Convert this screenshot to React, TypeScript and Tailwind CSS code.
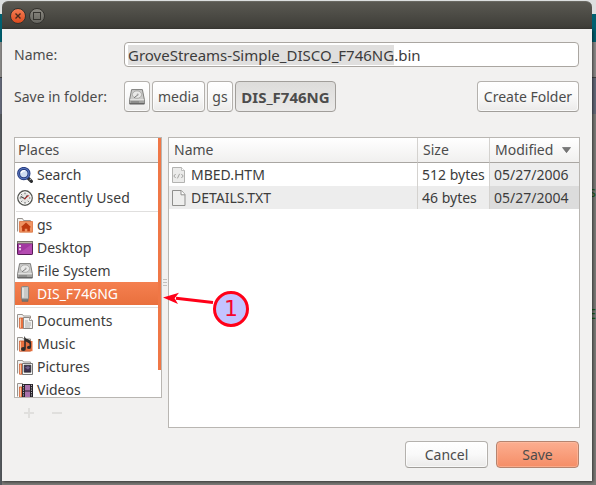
import { useEffect, useRef, useState } from "react";
import type { ReactNode } from "react";
import { clsx } from "clsx";

const FILE_STEM = "GroveStreams-Simple_DISCO_F746NG";

const BUTTON =
  "h-full rounded border border-[#b4b1ad] border-b-[#a19e9a] bg-linear-to-b from-white via-[#f9f9f9] to-[#ebeae9] text-center shadow-[inset_0_0_0_1px_#ffffffb0]";

function Icon({ children }: { children: ReactNode }) {
  return (
    <svg viewBox="0 0 16 16" className="size-4 shrink-0" aria-hidden="true">
      {children}
    </svg>
  );
}

function SearchIcon() {
  return (
    <Icon>
      <path d="M11 11l3.4 3.4" stroke="#2b2d30" strokeWidth="3.2" strokeLinecap="round" />
      <path d="M12.5 13l1.6-1" stroke="#b9bcc0" strokeWidth="1" />
      <circle cx="6.8" cy="6.6" r="5.2" fill="#cfdcf0" stroke="#23387c" strokeWidth="3" />
      <circle cx="6.8" cy="6.6" r="5.2" fill="none" stroke="#5876bd" strokeWidth="1.1" />
      <path d="M4.2 6.2a3 3 0 0 1 4-2.4" fill="none" stroke="#fff" strokeWidth="1.4" />
    </Icon>
  );
}

function ClockIcon() {
  return (
    <Icon>
      <circle cx="8" cy="8" r="7.2" fill="#e6e6e4" stroke="#555753" strokeWidth="1.4" />
      <circle cx="8" cy="8" r="6" fill="none" stroke="#fff" strokeWidth="0.9" />
      <path d="M8 2.6v1.6M8 12v1.6M2.6 8h1.6M12 8h1.4M4.2 4.2l1 1M11.8 11.8l-1-1M4.2 11.8l1-1" stroke="#666" strokeWidth="1" />
      <path d="M3.7 6.4L8 8.7l2.5-3.6" fill="none" stroke="#454545" strokeWidth="1.1" />
      <path d="M7 9.2l5.2-3.9" stroke="#d22" strokeWidth="0.9" />
    </Icon>
  );
}

// grey tab folder with the orange sheet, shared by the media folders
function FolderBase({ children }: { children: ReactNode }) {
  return (
    <Icon>
      <path d="M.5 14.5V1.5h5l1 1.5h7v3" fill="#f2f2f1" stroke="#99948f" />
      <path d="M2.5 15.2V5h11v10.2z" fill="#e8713f" stroke="#c65427" strokeWidth="0.8" />
      <path d="M3.4 5.5v9.2" stroke="#f8c5a0" strokeWidth="1.2" />
      {children}
    </Icon>
  );
}

function HomeIcon() {
  return (
    <Icon>
      <path d="M.5 14.5v-13h5l1 2h7v2" fill="#f2f2f1" stroke="#99948f" />
      <path d="M2.5 4.5h13v10.7h-13z" fill="#f09463" stroke="#d9713e" strokeWidth="0.8" />
      <path d="M9 5.6l5.2 4.7h-1.3v4h-2.6v-2.6H7.8v2.6H5.1v-4H3.8z" fill="#bd3a0f" />
    </Icon>
  );
}

function DesktopIcon() {
  return (
    <Icon>
      <rect x=".5" y="1.5" width="15" height="13" rx=".6" fill="#a23aa0" stroke="#571c56" />
      <path d="M1.2 14L15 4v10z" fill="#c25abf" opacity=".55" />
      <path d="M0 1h16v2.6H0z" fill="#77766b" />
      <path d="M1 2h14v.8H1z" fill="#c9c8b7" />
      <path d="M2 5h2v2H2zM2 8.2h2v2H2z" fill="#ead3e9" />
    </Icon>
  );
}

function DriveIcon() {
  return (
    <Icon>
      <path d="M2.6.6h10.8l2 10.2v4H.6v-4z" fill="#cbcbca" stroke="#7e7e7c" />
      <ellipse cx="8" cy="5.6" rx="4.6" ry="3.7" fill="#e9e9e8" stroke="#a2a2a0" strokeWidth=".8" />
      <path d="M5 8.8l4-3" stroke="#777" strokeWidth="1" />
      <circle cx="8.7" cy="5.5" r="1" fill="#aaa" />
      <path d="M1 11h14v3.6H1z" fill="#a3a3a1" />
      <path d="M1 10.9h14" stroke="#f7f7f7" strokeWidth=".8" />
      <path d="M3 12v2M5 12v2M7 12v2M9 12v2" stroke="#6c6c6c" strokeWidth=".8" />
      <path d="M.6 14.8h14.8" stroke="#4f4f4f" />
    </Icon>
  );
}

function UsbIcon() {
  return (
    <Icon>
      <path d="M5 12h6v3.4H5z" fill="#777775" stroke="#686865" strokeWidth=".6" />
      <rect x="4.4" y=".6" width="7.2" height="12.4" rx="1" fill="#c8c9c7" stroke="#848482" />
      <path d="M6 2v9.6" stroke="#ebebea" strokeWidth="1.4" />
    </Icon>
  );
}

function DocumentsIcon() {
  return (
    <FolderBase>
      <path d="M6.5 4.5h6l3 3v8h-9z" fill="#f2f2f1" stroke="#8b8985" />
      <path d="M12.5 4.5v3h3" fill="#fff" stroke="#8b8985" strokeWidth=".8" />
      <path d="M8 8h3M8 10h6M8 12h6M8 14h5" stroke="#a6a6a4" strokeWidth=".9" />
    </FolderBase>
  );
}

function MusicIcon() {
  return (
    <FolderBase>
      <path d="M13.5 5h2v10.2h-2z" fill="#e8713f" />
      <path d="M8 12.4V2.6c1 1.5 5.3 1.3 5.3 4.4v4" fill="none" stroke="#2c2c2c" strokeWidth="1.6" />
      <path d="M8.2 4l5 3" stroke="#2c2c2c" strokeWidth="1.8" />
      <ellipse cx="6.4" cy="13" rx="2.4" ry="1.9" fill="#2c2c2c" />
      <ellipse cx="12" cy="11.4" rx="2" ry="1.7" fill="#2c2c2c" />
    </FolderBase>
  );
}

function PicturesIcon() {
  return (
    <FolderBase>
      <path d="M5.5 4.5h10v11h-10z" fill="#f7f7f7" stroke="#777" />
      <path d="M7.2 6.2h6.6v7H7.2z" fill="#3d3150" stroke="#222" strokeWidth=".7" />
      <path d="M8 8.4l3-1.4 2 1.6-2 2z" fill="#74658d" />
    </FolderBase>
  );
}

function VideosIcon() {
  return (
    <FolderBase>
      <path d="M5 2h11v13.8H5z" fill="#272329" />
      <path d="M8 3h5v5.4H8zM8 9.4h5v5.6H8z" fill="#a971ab" />
      <path d="M6.5 2.8v12.6M14.5 2.8v12.6" stroke="#b9b4bb" strokeWidth="1" strokeDasharray="1.2 1.2" />
    </FolderBase>
  );
}

function HtmlFileIcon() {
  return (
    <Icon>
      <path d="M1.5.5h9l3 3v12h-12z" fill="#ebebea" stroke="#b3b3b1" />
      <path d="M10.5.5v3h3" fill="#fff" stroke="#b3b3b1" strokeWidth=".8" />
      <path d="M4.6 7L2.8 9l1.8 2M10.4 7l1.8 2-1.8 2M8.6 6.8l-2.2 4.6" fill="none" stroke="#989896" strokeWidth=".9" />
    </Icon>
  );
}

function TextFileIcon() {
  return (
    <Icon>
      <path d="M1.5.5h8.8l3.7 4v11H1.5z" fill="#eeeeed" stroke="#8f8f8d" />
      <path d="M10 .8v4h4" fill="#fff" stroke="#8f8f8d" />
    </Icon>
  );
}

const placeGroups = [
  [
    { name: "Search", icon: <SearchIcon /> },
    { name: "Recently Used", icon: <ClockIcon /> },
  ],
  [
    { name: "gs", icon: <HomeIcon /> },
    { name: "Desktop", icon: <DesktopIcon /> },
    { name: "File System", icon: <DriveIcon /> },
    { name: "DIS_F746NG", icon: <UsbIcon /> },
  ],
  [
    { name: "Documents", icon: <DocumentsIcon /> },
    { name: "Music", icon: <MusicIcon /> },
    { name: "Pictures", icon: <PicturesIcon /> },
    { name: "Videos", icon: <VideosIcon /> },
  ],
];

const files = [
  { name: "MBED.HTM", size: "512 bytes", modified: "05/27/2006", icon: <HtmlFileIcon /> },
  { name: "DETAILS.TXT", size: "46 bytes", modified: "05/27/2004", icon: <TextFileIcon /> },
];

function Backdrop() {
  return (
    <div
      aria-hidden="true"
      className="absolute inset-0 -z-10 flex flex-col overflow-hidden bg-[#7c7b78] text-right text-sm leading-4 text-[#1d5c1b]"
    >
      <div className="h-3.5 bg-[#dcdfdf]" />
      <div className="h-7 bg-[#006070]" />
      <div className="h-9 border-b border-[#444] bg-[#8b8a88]" />
      <div className="h-9 bg-[#656a7a]" />
      <div className="flex-1 border-l-2 border-[#565b5f]">
        <div className="pt-[70px]">s</div>
        <div className="pt-[106px]">E</div>
      </div>
    </div>
  );
}

function TitleBar() {
  return (
    <header className="flex h-7 shrink-0 items-center gap-[3px] rounded-t-md border-t border-[#6a6962] bg-linear-to-b from-[#5a5952] to-[#3d3c37] px-2">
      <button
        aria-label="Close"
        className="flex size-4 items-center justify-center rounded-full border border-[#33322e] bg-linear-to-b from-[#f57c52] to-[#dd4a1c]"
      >
        <svg viewBox="0 0 8 8" className="size-2">
          <path d="M1.5 1.5l5 5M6.5 1.5l-5 5" stroke="#4a2a1c" strokeWidth="1.4" />
        </svg>
      </button>
      <button
        aria-label="Maximize"
        className="flex size-4 items-center justify-center rounded-full border border-[#33322e] bg-linear-to-b from-[#8b8982] to-[#66655f]"
      >
        <span className="size-2 border border-[#34332f]" />
      </button>
    </header>
  );
}

function PlacesPane() {
  const [selected, setSelected] = useState("DIS_F746NG");
  return (
    <div className="flex min-h-0 w-[148px] shrink-0 flex-col">
      <div className="flex min-h-0 flex-1 overflow-hidden border border-[#b9b6b2] bg-white">
        <div className="min-w-0 flex-1">
          <h2 className="h-[25px] border-b border-[#a9a6a2] bg-linear-to-b from-white to-[#f0efee] pl-[3px] leading-6">
            Places
          </h2>
          {placeGroups.map((group, i) => (
            <div key={i}>
              {i > 0 && <hr className="mt-0.5 mb-px ml-px border-[#e0dfde]" />}
              <ul>
                {group.map((place) => (
                  <li key={place.name}>
                    <button
                      onClick={() => setSelected(place.name)}
                      className={clsx(
                        "flex h-[23px] w-full items-center gap-1 pl-0.5 text-left whitespace-nowrap",
                        place.name === selected
                          ? "bg-linear-to-b from-[#f58050] to-[#e9703d] text-white"
                          : "text-[#3c3c3c]"
                      )}
                    >
                      {place.icon}
                      {place.name}
                    </button>
                  </li>
                ))}
              </ul>
            </div>
          ))}
        </div>
        <div className="h-[232px] w-[3px] bg-[#f07746]" />
      </div>
      <div className="flex h-[30px] shrink-0 items-center gap-4 pl-[9px] text-[#e0dfdd]">
        <button disabled aria-label="Add bookmark" className="p-px">
          <svg viewBox="0 0 10 10" className="size-2.5">
            <path d="M0 5h10M5 0v10" stroke="currentColor" strokeWidth="2" />
          </svg>
        </button>
        <button disabled aria-label="Remove bookmark" className="p-px">
          <svg viewBox="0 0 10 10" className="size-2.5">
            <path d="M0 5h10" stroke="currentColor" strokeWidth="2" />
          </svg>
        </button>
      </div>
    </div>
  );
}

function Splitter() {
  return (
    <div className="relative flex w-1.5 shrink-0 flex-col items-center justify-center gap-0.5">
      <span className="h-px w-1 bg-[#c2c0bd]" />
      <span className="h-px w-1 bg-[#c2c0bd]" />
      <span className="h-px w-1 bg-[#c2c0bd]" />
      {/* step marker pointing at the selected drive */}
      <svg viewBox="0 0 88 38" className="absolute top-[153px] left-0 z-10 h-[38px] w-[88px]">
        <path d="M14 8.2L51 12.4" stroke="#ff0018" strokeWidth="3" />
        <path d="M1 7.5L17 2.8L12.6 8.2L16 14z" fill="#ff0018" />
        <circle cx="69" cy="19" r="16.5" fill="#c3c3ff" stroke="#ff0018" strokeWidth="3" />
        <text x="69" y="26" textAnchor="middle" fontSize="22" fill="#f5052d" fontFamily="DejaVu Sans, sans-serif">
          1
        </text>
      </svg>
    </div>
  );
}

function FileTable() {
  return (
    <div className="min-w-0 flex-1 overflow-hidden border border-[#b9b6b2] bg-white">
      <table className="w-full table-fixed border-separate border-spacing-0 text-left whitespace-nowrap">
        <colgroup>
          <col />
          <col className="w-[72px]" />
          <col className="w-[90px]" />
        </colgroup>
        <thead>
          <tr className="h-[25px] bg-linear-to-b from-white to-[#f0efee]">
            <th className="border-b border-[#a9a6a2] p-0 pl-[5px] font-normal">Name</th>
            <th className="border-b border-l border-b-[#a9a6a2] border-l-[#d4d2cf] p-0 pl-[5px] font-normal">Size</th>
            <th className="border-b border-l border-b-[#a9a6a2] border-l-[#d4d2cf] p-0 pl-[5px] font-normal">
              <div className="flex items-center justify-between pr-2">
                Modified
                <svg viewBox="0 0 9 6" className="h-1.5 w-[9px]">
                  <path d="M.5.5h8L4.5 5.7z" fill="#777" stroke="#5e5e5e" strokeWidth=".6" />
                </svg>
              </div>
            </th>
          </tr>
        </thead>
        <tbody className="text-[#3c3c3c]">
          {files.map((file) => (
            <tr key={file.name} className="group h-[23px] even:bg-[#ededed]">
              <td className="p-0">
                <div className="flex items-center gap-1 pl-0.5">
                  {file.icon}
                  {file.name}
                </div>
              </td>
              <td className="border-l border-[#d4d2cf] p-0 pl-1">{file.size}</td>
              <td className="border-l border-[#d4d2cf] bg-[#ededed] p-0 pl-1 group-even:bg-[#dcdcdc]">
                {file.modified}
              </td>
            </tr>
          ))}
        </tbody>
      </table>
    </div>
  );
}

export default function App() {
  const [name, setName] = useState(FILE_STEM + ".bin");
  const nameRef = useRef<HTMLInputElement>(null);

  // preselect the file name without its extension
  useEffect(() => {
    nameRef.current?.focus();
    nameRef.current?.setSelectionRange(0, FILE_STEM.length);
  }, []);

  return (
    <div className="relative isolate flex h-screen flex-col pt-px pr-1 pb-1 pl-0.5 font-['Noto_Sans',sans-serif] text-sm leading-5 text-[#4c4c4c]">
      <Backdrop />
      <TitleBar />
      <main className="flex min-h-0 flex-1 flex-col bg-[#f2f1f0] px-3 py-[13px] shadow-[1px_1px_3px_#0009]">
        <div className="mr-px flex h-[25px] items-center">
          <label htmlFor="name" className="w-[110px] shrink-0">
            Name:
          </label>
          <input
            id="name"
            ref={nameRef}
            value={name}
            onChange={(e) => setName(e.target.value)}
            className="h-full min-w-0 flex-1 rounded border border-[#aaa6a1] bg-white px-[3px] text-[15px] text-[#3c3c3c] outline-none selection:bg-[#e0dfde] selection:text-[#3c3c3c]"
          />
        </div>

        <div className="mt-3.5 mr-px flex h-[31px] items-center">
          <span className="w-[110px] shrink-0 whitespace-nowrap">Save in folder:</span>
          <nav aria-label="Folder path" className="flex h-full gap-0.5">
            <button aria-label="Root" className={clsx(BUTTON, "flex w-[26px] items-center justify-center")}>
              <DriveIcon />
            </button>
            <button className={clsx(BUTTON, "w-[53px]")}>media</button>
            <button className={clsx(BUTTON, "w-[26px]")}>gs</button>
            <button
              aria-current="true"
              className="h-full w-[101px] rounded border border-[#a19e9a] bg-linear-to-b from-[#dddcda] to-[#ebeae9] text-[15px] font-bold"
            >
              DIS_F746NG
            </button>
          </nav>
          <button className={clsx(BUTTON, "ml-auto w-[102px] whitespace-nowrap")}>Create Folder</button>
        </div>

        <div className="mt-[25px] flex min-h-0 flex-1">
          <PlacesPane />
          <Splitter />
          <FileTable />
        </div>

        <footer className="mt-[13px] mr-px flex h-[27px] shrink-0 justify-end gap-2">
          <button className={clsx(BUTTON, "w-[83px]")}>Cancel</button>
          <button className="w-[83px] rounded border border-[#b5846f] bg-linear-to-b from-[#fcae90] to-[#f58d66] shadow-[inset_0_0_0_1px_#ffc3aa80]">
            Save
          </button>
        </footer>
      </main>
    </div>
  );
}
